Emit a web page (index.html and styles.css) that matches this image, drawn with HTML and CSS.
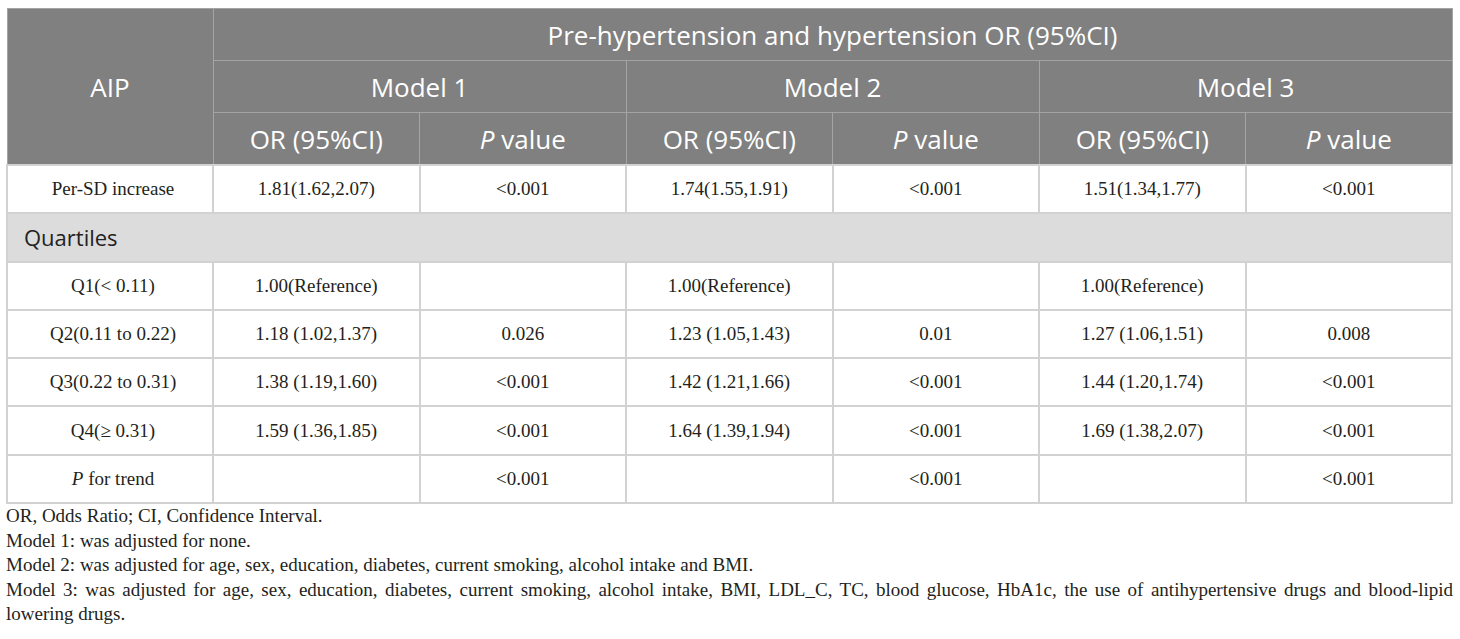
FILE: index.html
```html
<!DOCTYPE html>
<html lang="en">
<head>
    <meta charset="UTF-8">
    <title>AIP and hypertension</title>
    <link rel="stylesheet" href="styles.css">
</head>
<body>
    <table class="results">
        <colgroup>
            <col class="col-label">
            <col><col><col><col><col><col>
        </colgroup>
        <thead>
            <tr>
                <th rowspan="3">AIP</th>
                <th colspan="6">Pre-hypertension and hypertension OR (95%CI)</th>
            </tr>
            <tr>
                <th colspan="2">Model 1</th>
                <th colspan="2">Model 2</th>
                <th colspan="2">Model 3</th>
            </tr>
            <tr>
                <th>OR (95%CI)</th>
                <th><i>P</i> value</th>
                <th>OR (95%CI)</th>
                <th><i>P</i> value</th>
                <th>OR (95%CI)</th>
                <th><i>P</i> value</th>
            </tr>
        </thead>
        <tbody>
            <tr>
                <td class="label">Per-SD increase</td>
                <td>1.81(1.62,2.07)</td>
                <td>&lt;0.001</td>
                <td>1.74(1.55,1.91)</td>
                <td>&lt;0.001</td>
                <td>1.51(1.34,1.77)</td>
                <td>&lt;0.001</td>
            </tr>
            <tr class="group">
                <td colspan="7">Quartiles</td>
            </tr>
            <tr>
                <td class="label">Q1(&lt; 0.11)</td>
                <td>1.00(Reference)</td>
                <td></td>
                <td>1.00(Reference)</td>
                <td></td>
                <td>1.00(Reference)</td>
                <td></td>
            </tr>
            <tr>
                <td class="label">Q2(0.11 to 0.22)</td>
                <td>1.18 (1.02,1.37)</td>
                <td>0.026</td>
                <td>1.23 (1.05,1.43)</td>
                <td>0.01</td>
                <td>1.27 (1.06,1.51)</td>
                <td>0.008</td>
            </tr>
            <tr>
                <td class="label">Q3(0.22 to 0.31)</td>
                <td>1.38 (1.19,1.60)</td>
                <td>&lt;0.001</td>
                <td>1.42 (1.21,1.66)</td>
                <td>&lt;0.001</td>
                <td>1.44 (1.20,1.74)</td>
                <td>&lt;0.001</td>
            </tr>
            <tr>
                <td class="label">Q4(&ge; 0.31)</td>
                <td>1.59 (1.36,1.85)</td>
                <td>&lt;0.001</td>
                <td>1.64 (1.39,1.94)</td>
                <td>&lt;0.001</td>
                <td>1.69 (1.38,2.07)</td>
                <td>&lt;0.001</td>
            </tr>
            <tr>
                <td class="label"><i>P</i> for trend</td>
                <td></td>
                <td>&lt;0.001</td>
                <td></td>
                <td>&lt;0.001</td>
                <td></td>
                <td>&lt;0.001</td>
            </tr>
        </tbody>
    </table>

    <!-- table footnotes -->
    <div class="notes">
        <p>OR, Odds Ratio; CI, Confidence Interval.</p>
        <p>Model 1: was adjusted for none.</p>
        <p>Model 2: was adjusted for age, sex, education, diabetes, current smoking, alcohol intake and BMI.</p>
        <p class="justify">Model 3: was adjusted for age, sex, education, diabetes, current smoking, alcohol intake, BMI, LDL_C, TC, blood glucose, HbA1c, the use of antihypertensive drugs and blood-lipid lowering drugs.</p>
    </div>
</body>
</html>
```

FILE: styles.css
```css
body {
    margin: 8px 7px 0 6px;
    background: #ffffff;
    font-family: 'Liberation Serif', 'Times New Roman', serif;
    color: #231f20;
}
.results {
    width: 1447px;
    border-collapse: collapse;
    table-layout: fixed;
}
.col-label {
    width: 206px;
}
.results th {
    background-color: #7f807f;
    color: #ffffff;
    font-family: 'Open Sans', sans-serif;
    font-weight: 400;
    font-size: 26px;
    height: 51px;
    padding: 0;
    border: 1px solid #a3a4a3;
    text-align: center;
}
.results th i {
    font-style: italic;
}
.results td {
    height: 46.3px;
    padding: 0;
    border: 2px solid #d2d2d2;
    text-align: center;
    font-size: 19px;
}
.results td.label {
    padding-left: 6px;
}
.results tr.group td {
    background-color: #dcdcdc;
    text-align: left;
    padding-left: 16px;
    font-family: 'Open Sans', sans-serif;
    font-size: 22px;
    color: #222;
}
.notes {
    margin-top: 0;
    font-size: 19px;
    line-height: 24.5px;
}
.notes p {
    margin: 0;
}
.notes .justify {
    text-align: justify;
}
```
